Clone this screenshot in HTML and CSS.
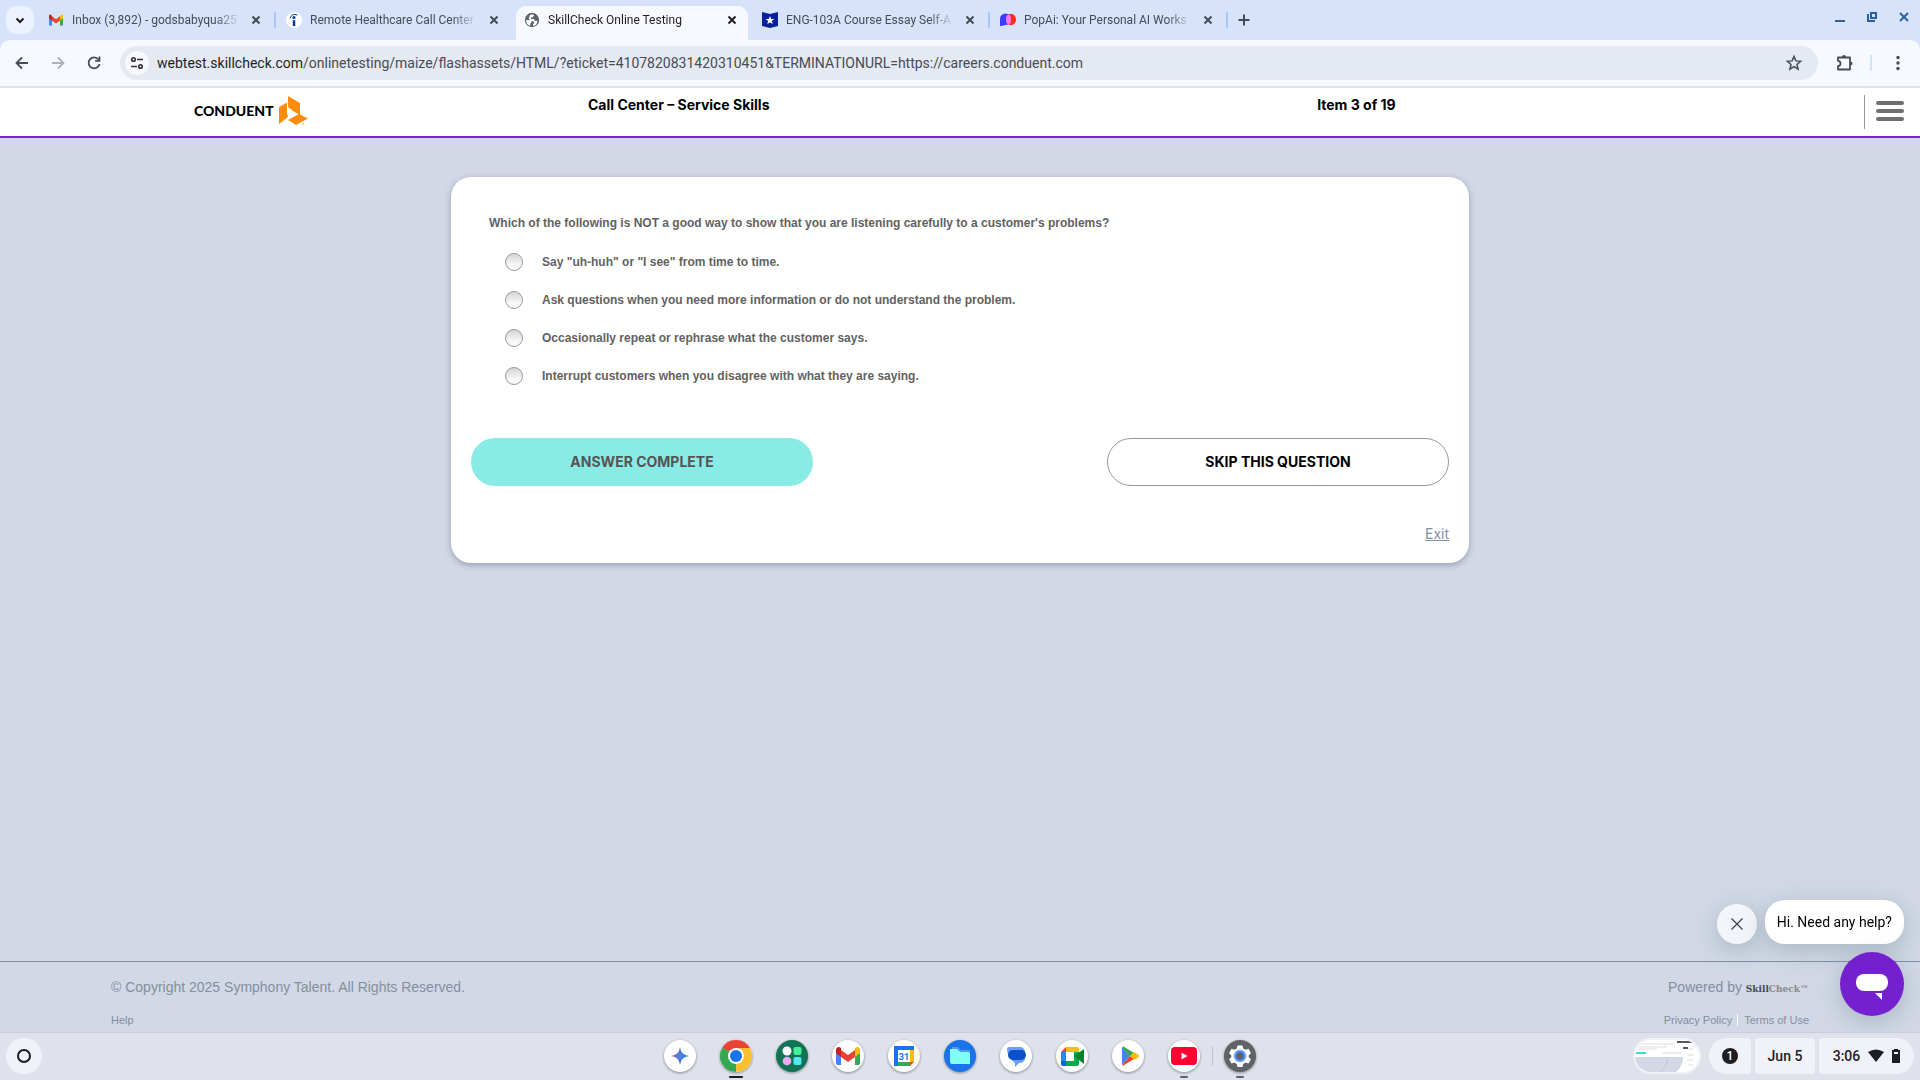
FILE: index.html
```html
<!DOCTYPE html>
<html lang="en">
<head>
    <meta charset="UTF-8">
    <meta name="viewport" content="width=device-width, initial-scale=1.0">
    <title>SkillCheck Online Testing</title>
    <link rel="stylesheet" href="styles.css">
</head>
<body>
    <!-- Browser tabs -->
    <div class="tab-strip">
        <button class="tab-search" aria-label="Search tabs"><svg width="28" height="28" viewBox="0 0 28 28"><path d="M10.5 12.5l3.5 3.5 3.5-3.5" fill="none" stroke="#1f1f1f" stroke-width="2"/></svg></button>
        <div class="tabs">
            <div class="tab">
                <svg class="favicon" viewBox="0 0 16 16"><path d="M1 4v9.500h3V7z" fill="#4285f4"/><path d="M15 4v9.500h-3V7z" fill="#34a853"/><path d="M4 8.500V4.200l4 3 4-3v4.300l-4 3z" fill="#ea4335"/><path d="M1 4q0-2 2-1.300l1 1.500v4.300L1 6.200z" fill="#c5221f"/><path d="M15 4q0-2-2-1.300l-1 1.500v4.300l3-2.300z" fill="#fbbc04"/></svg>
                <span class="tab-title">Inbox (3,892) - godsbabyqua25</span>
                <button class="tab-close" aria-label="Close tab"><svg width="16" height="16" viewBox="0 0 16 16"><path d="M4.500 4.500l7 7M11.500 4.500l-7 7"/></svg></button>
            </div>
            <div class="tab">
                <svg class="favicon" viewBox="0 0 16 16"><circle cx="8" cy="8" r="8" fill="#fff"/><circle cx="8" cy="5.500" r="1.500" fill="#003a9b"/><path d="M8 8.200v5.800" stroke="#003a9b" stroke-width="2.500"/><path d="M4 6.500Q5.500 1 11.500 3" fill="none" stroke="#003a9b"/></svg>
                <span class="tab-title">Remote Healthcare Call Center</span>
                <button class="tab-close" aria-label="Close tab"><svg width="16" height="16" viewBox="0 0 16 16"><path d="M4.500 4.500l7 7M11.500 4.500l-7 7"/></svg></button>
            </div>
            <div class="tab active">
                <svg class="favicon" viewBox="0 0 16 16"><circle cx="8" cy="8" r="7.200" fill="#5f6368"/><path d="M2 8l4 .3 1.500 1.600L6.300 12v1.800A6 6 0 0 1 2 8zM6 3l3-.8 1 1.600-1.700 1.600H6.800v1.500h3.100L11 9l2.500-.2Q13 13.500 9 14v-1.800l1.300-1.500-1-1.500H6.700L4.700 6.400z" fill="#fff"/></svg>
                <span class="tab-title">SkillCheck Online Testing</span>
                <button class="tab-close" aria-label="Close tab"><svg width="16" height="16" viewBox="0 0 16 16"><path d="M4.500 4.500l7 7M11.500 4.500l-7 7"/></svg></button>
            </div>
            <div class="tab">
                <svg class="favicon" viewBox="0 0 16 16"><path d="M0 0l8 2 8-2v14l-8 2-8-2z" fill="#07209b"/><path d="M8 4l1.200 2.900 3.100.2-2.400 2 .8 3L8 10.400l-2.700 1.700.8-3-2.400-2 3.100-.2z" fill="#fff"/></svg>
                <span class="tab-title">ENG-103A Course Essay Self-A</span>
                <button class="tab-close" aria-label="Close tab"><svg width="16" height="16" viewBox="0 0 16 16"><path d="M4.500 4.500l7 7M11.500 4.500l-7 7"/></svg></button>
            </div>
            <div class="tab">
                <svg class="favicon" viewBox="0 0 16 16"><path d="M0 14V7a5.500 5.500 0 0 1 11 0c0 4-3 6-6 6q-2 1-5 1z" fill="#3c3cff"/><ellipse cx="11" cy="7.500" rx="5" ry="5.800" fill="#ff2a1a"/><ellipse cx="8.500" cy="7.500" rx="2.500" ry="4.800" fill="#f47af5"/></svg>
                <span class="tab-title">PopAi: Your Personal AI Works</span>
                <button class="tab-close" aria-label="Close tab"><svg width="16" height="16" viewBox="0 0 16 16"><path d="M4.500 4.500l7 7M11.500 4.500l-7 7"/></svg></button>
            </div>
        </div>
        <button class="new-tab" aria-label="New tab"><svg width="16" height="16" viewBox="0 0 16 16"><path d="M8 2.500v11M2.500 8h11" stroke="#444c58" stroke-width="2"/></svg></button>
        <div class="window-controls">
            <button aria-label="Minimize"><svg width="16" height="16" viewBox="0 0 16 16"><path d="M3 12h10" stroke="#2862a0" stroke-width="2"/></svg></button>
            <button aria-label="Restore"><svg width="16" height="16" viewBox="0 0 16 16"><path d="M7 4h5v5H7zM4 5v7h7" fill="none" stroke="#2862a0" stroke-width="2"/></svg></button>
            <button aria-label="Close"><svg width="16" height="16" viewBox="0 0 16 16"><path d="M4 4l8 8M12 4l-8 8" stroke="#2862a0" stroke-width="2"/></svg></button>
        </div>
    </div>

    <!-- Address bar -->
    <div class="toolbar">
        <button aria-label="Back"><svg width="20" height="20" viewBox="0 0 20 20"><path d="M16 10H5M10 4.500L4.500 10l5.500 5.500" fill="none" stroke="#444c58" stroke-width="1.800"/></svg></button>
        <button aria-label="Forward"><svg width="20" height="20" viewBox="0 0 20 20"><path d="M4 10h11M10 4.500l5.500 5.500-5.500 5.500" fill="none" stroke="#aeb0b5" stroke-width="1.800"/></svg></button>
        <button aria-label="Reload"><svg width="20" height="20" viewBox="0 0 20 20"><path d="M14.500 6.500a5.500 5.500 0 1 0 1 4.500M15.500 3.500v4.300h-4.300" fill="none" stroke="#444c58" stroke-width="1.800"/></svg></button>
        <div class="omnibox">
            <button class="site-info" aria-label="Site information"><svg width="16" height="16" viewBox="0 0 16 16"><g fill="none" stroke="#333" stroke-width="1.600"><circle cx="4.500" cy="4.500" r="1.800"/><circle cx="11.500" cy="11.500" r="1.800"/><path d="M8 4.500h6M2 11.500h6"/></g></svg></button>
            <span class="url"><b>webtest.skillcheck.com</b>/onlinetesting/maize/flashassets/HTML/?eticket=4107820831420310451&amp;TERMINATIONURL=https://careers.conduent.com</span>
            <button class="bookmark" aria-label="Bookmark this tab"><svg width="18" height="18" viewBox="0 0 18 18"><path d="M9 2.500l1.900 4.400 4.700.4-3.600 3.100 1.100 4.700L9 12.600l-4.100 2.500L6 10.400 2.400 7.300l4.700-.4z" fill="none" stroke="#444c58" stroke-width="1.500"/></svg></button>
        </div>
        <button class="extensions" aria-label="Extensions"><svg width="20" height="20" viewBox="0 0 20 20"><path d="M4 4.500h12v12H4v-3.300q2.500-.2 2.500-2.700T4 7.800z" fill="none" stroke="#444c58" stroke-width="1.800" stroke-linejoin="round"/><path d="M8 4a2 2 0 0 1 4 0zM16.500 8.500a2 2 0 0 1 0 4z" fill="#444c58"/></svg></button>
        <span class="toolbar-divider"></span>
        <button class="more" aria-label="More"><svg width="20" height="20" viewBox="0 0 20 20"><g fill="#444c58"><circle cx="10" cy="4.500" r="1.700"/><circle cx="10" cy="10" r="1.700"/><circle cx="10" cy="15.500" r="1.700"/></g></svg></button>
    </div>

    <!-- Page -->
    <header class="page-header">
        <div class="logo">
            <span>CONDUENT</span>
            <svg width="30" height="30" viewBox="0 0 30 30" fill="#ff8c0a"><path d="M9 0l12 7v12l-7-4-5-4z"/><path d="M0 11l8-4.500V17l1 4-9 7z"/><path d="M20 18l9 4.500-12 6.500-8-5z"/><circle cx="24" cy="28" r=".8"/></svg>
        </div>
        <h1>Call Center – Service Skills</h1>
        <div class="item-count">Item 3 of 19</div>
        <button class="menu" aria-label="Menu"><span></span><span></span><span></span></button>
    </header>

    <main class="content">
        <form class="card">
            <fieldset>
                <legend>Which of the following is NOT a good way to show that you are listening carefully to a customer's problems?</legend>
                <label><input type="radio" name="answer">Say "uh-huh" or "I see" from time to time.</label>
                <label><input type="radio" name="answer">Ask questions when you need more information or do not understand the problem.</label>
                <label><input type="radio" name="answer">Occasionally repeat or rephrase what the customer says.</label>
                <label><input type="radio" name="answer">Interrupt customers when you disagree with what they are saying.</label>
            </fieldset>
            <div class="actions">
                <button type="button" class="answer">ANSWER COMPLETE</button>
                <button type="button" class="skip">SKIP THIS QUESTION</button>
            </div>
            <a class="exit" href="#">Exit</a>
        </form>
    </main>

    <footer class="page-footer">
        <div class="footer-row">
            <span>© Copyright 2025 Symphony Talent. All Rights Reserved.</span>
            <span>Powered by <span class="brand"><b>Skill</b>Check™</span></span>
        </div>
        <div class="footer-row footer-links">
            <a href="#">Help</a>
            <div class="legal"><a href="#">Privacy Policy</a><a href="#">Terms of Use</a></div>
        </div>
    </footer>

    <!-- Chat widget -->
    <div class="chat">
        <div class="chat-row">
            <button class="chat-dismiss" aria-label="Dismiss"><svg width="14" height="14" viewBox="0 0 14 14"><path d="M1.500 1.500l11 11M12.500 1.500l-11 11" stroke="#3c4450" stroke-width="1.300"/></svg></button>
            <div class="chat-bubble">Hi. Need any help?</div>
        </div>
        <button class="chat-open" aria-label="Open chat"><svg width="64" height="64" viewBox="0 0 64 64" fill="#fff"><rect x="16" y="22" width="32" height="17" rx="8"/><path d="M35 41h7v7z"/></svg></button>
    </div>

    <!-- Shelf -->
    <div class="shelf">
        <button class="launcher" aria-label="Launcher"><svg width="16" height="16" viewBox="0 0 16 16"><circle cx="8" cy="8" r="6" fill="none" stroke="#1b1d22" stroke-width="2"/></svg></button>
        <div class="apps">
            <button aria-label="Gemini"><svg viewBox="0 0 32 32"><defs><linearGradient id="spark"><stop offset="0" stop-color="#8a6fc0"/><stop offset="1" stop-color="#1c8bea"/></linearGradient></defs><path d="M16 7q1 8 9 9-8 1-9 9-1-8-9-9 8-1 9-9z" fill="url(#spark)"/></svg></button>
            <button class="open current" aria-label="Chrome"><svg viewBox="0 0 32 32"><path d="M16 16L2.140 8A16 16 0 0 1 29.860 8z" fill="#ea4335"/><path d="M16 16L29.860 8A16 16 0 0 1 16 32z" fill="#fbc02d"/><path d="M16 16v16A16 16 0 0 1 2.140 8z" fill="#34a853"/><path d="M16 8h13.860L23 20l-7 12 3-9z" fill="#fbc02d"/><path d="M2.140 8l7 12L16 24l-5-12z" fill="#34a853"/><circle cx="16" cy="16" r="8" fill="#fff"/><circle cx="16" cy="16" r="6" fill="#1a73e8"/></svg></button>
            <button class="green" aria-label="Apps"><svg viewBox="0 0 32 32"><circle cx="11" cy="11" r="4.500" fill="#fff"/><rect x="17.500" y="7" width="8" height="8" rx="2" fill="#46ef98"/><circle cx="11" cy="21" r="4.300" fill="#efabf5"/><rect x="17.500" y="17" width="8" height="8" rx="2" fill="#57e8ef"/></svg></button>
            <button aria-label="Gmail"><svg viewBox="0 0 32 32"><path d="M4 10v13q0 2 2 2h3V13z" fill="#4285f4"/><path d="M28 10v13q0 2-2 2h-3V13z" fill="#34a853"/><path d="M9 17v-7l7 5 7-5v7l-7 5z" fill="#ea4335"/><path d="M4 10c0-3 3-4 5-2v9l-5-4z" fill="#c5221f"/><path d="M28 10c0-3-3-4-5-2v9l5-4z" fill="#fbbc04"/></svg></button>
            <button aria-label="Calendar"><svg viewBox="0 0 32 32"><path d="M6 6h20v4H10v16H6z" fill="#1a73e8"/><path d="M22 10h4v12h-4z" fill="#fbbc04"/><path d="M10 22h12v4H10z" fill="#34a853"/><path d="M22 22h4l-4 4z" fill="#ea4335"/><path d="M10 10h12v12H10z" fill="#fff"/><text x="16" y="20" class="calendar-day">31</text></svg></button>
            <button class="blue" aria-label="Files"><svg viewBox="0 0 32 32"><path d="M8 7h6l3 3h9v13H8z" fill="#4b9bff"/><path d="M6 9h7l3 3h8q2 0 2 2v10H8q-2 0-2-2z" fill="#83fff4"/></svg></button>
            <button aria-label="Messages"><svg viewBox="0 0 32 32"><path d="M9 7h11a5 5 0 0 1 5 5v6a5 5 0 0 1-5 5h-1l-4 4v-4q-7-5-8-13 0-3 2-3z" fill="#6c9cf8"/><rect x="8" y="10" width="18" height="10" rx="5" fill="#0b50c8"/></svg></button>
            <button aria-label="Meet"><svg viewBox="0 0 32 32"><path d="M5 12l5-5v5z" fill="#ea4335"/><path d="M10 7h11q2 0 2 2v3H10z" fill="#fbbc04"/><path d="M5 12h5v9H5z" fill="#2684fc"/><path d="M5 21h5v5H7q-2 0-2-2z" fill="#0066da"/><path d="M10 21h8v-9h5v12q0 2-2 2H10z" fill="#00ac47"/><path d="M10 12h8v9h-8z" fill="#fff"/><path d="M18 16l10-7v15z" fill="#00832d"/></svg></button>
            <button aria-label="Play Store"><svg viewBox="0 0 32 32"><path d="M10 7v18l8-9z" fill="#4285f4"/><path d="M10 7q1-1 3 .5l10 6-5 3z" fill="#34a853"/><path d="M10 25l8-9 4 3-10 6q-1 1-2 0z" fill="#ea4335"/><path d="M22 12l4 2.500q2 1.500 0 3L22 20l-4-4z" fill="#fbbc04"/></svg></button>
            <button class="open" aria-label="YouTube"><svg viewBox="0 0 32 32"><rect x="3" y="7" width="26" height="18" rx="4" fill="#ff0033"/><path d="M13.500 12.500v7l6-3.500z" fill="#fff"/></svg></button>
            <span class="shelf-divider"></span>
            <button class="open gray" aria-label="Settings"><svg viewBox="0 0 32 32"><path d="M13.500 5.500h5l.7 3 2.300 1.300 3-1 2.500 4.400-2.300 2v2l2.300 2-2.500 4.300-3-1-2.300 1.400-.7 3h-5l-.7-3-2.300-1.400-3 1L5 19.200l2.300-2v-2L5 13.200l2.500-4.400 3 1 2.300-1.300z" fill="#fff"/><circle cx="16" cy="16" r="6.500" fill="#8ab4f8"/><circle cx="16" cy="16" r="5" fill="#4285f4"/><circle cx="16" cy="16" r="3.500" fill="#5f6368"/></svg></button>
        </div>
        <div class="status">
            <button class="holding" aria-label="Recent screenshots"><svg width="64" height="32" viewBox="0 0 64 32"><defs><clipPath id="shots"><rect width="64" height="32" rx="16"/></clipPath></defs><g clip-path="url(#shots)"><rect width="64" height="32" fill="#fff"/><path d="M0 17h48q0 9-7 15H0z" fill="#d2d8e6"/><path d="M25 32q8-6 8-15" fill="none" stroke="#bcc4d6"/><path d="M2 4h38M3 7h29M4 9h18M27 13h20M52 9h6M53 15h6M52 20h6M53 25h5" stroke="#ddd"/><path d="M1 13h10" stroke="#49d9ce" stroke-width="2"/><path d="M42 2h17M48 8h5" stroke="#222" stroke-width="1.500"/></g></svg></button>
            <button class="notice" aria-label="Notifications"><span>1</span></button>
            <button class="date">Jun 5</button>
            <button class="clock">3:06
                <svg width="16" height="14" viewBox="0 0 16 14"><path d="M0 3q8-5 16 0L8 13z" fill="#1b1d22"/></svg>
                <svg width="8" height="14" viewBox="0 0 8 14"><path d="M2 0h4v1h2v13H0V1h2z" fill="#1b1d22"/><path d="M2 3h4v2H2z" fill="#f1f1f8"/></svg>
            </button>
        </div>
    </div>
</body>
</html>
```
FILE: styles.css
```css
* {
    box-sizing: border-box;
}
body {
    font-family: Roboto, sans-serif;
    display: flex;
    flex-direction: column;
    min-height: 100vh;
    margin: 0;
    background: #d2d8e6;
}
button {
    display: flex;
    align-items: center;
    justify-content: center;
    flex-shrink: 0;
    padding: 0;
    border: none;
    background: none;
    font-family: inherit;
    cursor: pointer;
}
h1 {
    margin: 0;
}

/* tabs, the strip runs on behind the toolbar's round corners */
.tab-strip {
    display: flex;
    height: 50px;
    margin-bottom: -10px;
    background: #d6e3fa;
}
.tab-search {
    width: 28px;
    height: 28px;
    margin: 6px 4px 0 6px;
    border-radius: 10px;
    background: #ecf2fe;
}
.tabs {
    display: flex;
}
.tab {
    display: flex;
    align-items: center;
    position: relative;
    width: 238px;
    height: 40px;
    padding-left: 10px;
    font-size: 12px;
    color: #444c58;
}
.tab::after {
    content: "";
    width: 2px;
    height: 16px;
    margin-left: 10px;
    background: #a8c7fa;
}
.favicon {
    width: 16px;
    height: 16px;
    flex-shrink: 0;
}
.tab-title {
    flex: 1;
    margin: 0 8px;
    overflow: hidden;
    white-space: nowrap;
    -webkit-mask-image: linear-gradient(to right, #000 85%, transparent);
    mask-image: linear-gradient(to right, #000 85%, transparent);
}
.tab-close svg {
    fill: none;
    stroke: #444c58;
    stroke-width: 2;
}
.tab.active {
    z-index: 0;
    color: #1f1f1f;
}
.tab.active::before {
    content: "";
    position: absolute;
    inset: 6px 4px 0 2px;
    z-index: -1;
    border-radius: 10px 10px 0 0;
    background: #f8f9ff;
}
.tab.active .tab-close svg {
    stroke: #1f1f1f;
}
.tab.active::after,
.tab:has(+ .active)::after {
    background: transparent;
}
.new-tab {
    width: 32px;
    height: 40px;
}
.window-controls {
    display: flex;
    gap: 16px;
    height: 34px;
    margin-left: auto;
    padding-right: 8px;
}

/* toolbar */
.toolbar {
    display: flex;
    align-items: center;
    z-index: 0;
    height: 48px;
    padding: 0 12px;
    border-bottom: 2px solid #dfe3ea;
    border-radius: 10px 10px 0 0;
    background: #f8f9ff;
}
.toolbar > button {
    width: 20px;
    margin-right: 16px;
}
.omnibox {
    display: flex;
    align-items: center;
    flex: 1;
    height: 34px;
    margin-right: 16px;
    padding: 0 15px 0 5px;
    border-radius: 17px;
    background: #e5e9f2;
}
.site-info {
    width: 24px;
    height: 24px;
    border-radius: 12px;
    background: #f8f9ff;
}
.url {
    flex: 1;
    margin-left: 8px;
    font-size: 14px;
    color: #474c55;
    white-space: nowrap;
}
.url b {
    font-weight: normal;
    color: #1f1f1f;
}
.toolbar-divider {
    width: 2px;
    height: 16px;
    margin-right: 16px;
    background: #d3e3fd;
}
.toolbar > .more {
    margin-right: 0;
}

/* page header */
.page-header {
    display: grid;
    grid-template-columns: 588px 4fr 3fr 56px;
    height: 50px;
    border-bottom: 2px solid #7424d0;
    background: #fff;
    font-family: Inter, sans-serif;
    font-size: 14px;
    font-weight: bold;
    line-height: 34px;
    color: #000;
}
.logo {
    display: flex;
    align-items: center;
    gap: 5px;
    padding: 0 0 2px 194px;
    font-family: Lato, sans-serif;
    font-weight: 900;
}
.page-header h1 {
    font-size: inherit;
}
.menu {
    flex-direction: column;
    gap: 4px;
    height: 34px;
    margin: 7px 0;
    padding: 0 6px 2px 0;
    border-left: 1px solid #999;
}
.menu span {
    width: 28px;
    height: 4px;
    border-radius: 2px;
    background: #707070;
}

/* question */
.content {
    flex: 1;
    padding: 39px 20px;
}
.card {
    max-width: 1018px;
    margin: auto;
    padding: 37px 20px 19px;
    border-radius: 20px;
    background: #fff;
    box-shadow: 0 2px 6px rgba(60, 70, 100, 0.4);
}
fieldset {
    margin: 0;
    padding: 0 0 0 18px;
    border: none;
    font: bold 12px/18px "Liberation Sans", Arial, sans-serif;
    color: #626262;
}
legend {
    padding: 0;
    margin-bottom: 11px;
}
fieldset label {
    display: flex;
    align-items: center;
    height: 38px;
    padding-left: 16px;
}
fieldset input {
    appearance: none;
    width: 18px;
    height: 18px;
    margin: 0 19px 0 0;
    border: 1px solid #999;
    border-radius: 50%;
    background: linear-gradient(#d4d4d4, #f8f8f8 70%);
}
.actions {
    display: flex;
    justify-content: space-between;
    margin-top: 43px;
}
.actions button {
    width: 342px;
    height: 48px;
    padding-bottom: 2px;
    border-radius: 24px;
    font: bold 14px Inter, sans-serif;
}
.answer {
    background: #88ebe6;
    color: #555;
}
.actions .skip {
    border: 1px solid #999;
    color: #000;
}
.exit {
    display: block;
    margin-top: 38px;
    font: 14px/20px Inter, sans-serif;
    text-align: right;
    color: #8090a0;
}

/* footer */
.page-footer {
    height: 119px;
    padding: 15px 111px 0;
    border-top: 1px solid #8090a0;
    font-family: "Liberation Sans", Arial, sans-serif;
    font-size: 14px;
    line-height: 20px;
    color: #8090a0;
}
.footer-row {
    display: flex;
    justify-content: space-between;
}
.brand {
    font: bold 9px "DejaVu Serif", serif;
    color: #888;
}
.brand b {
    color: #444a58;
}
.footer-links {
    margin-top: 15px;
    font-size: 11px;
    line-height: 16px;
}
.footer-links a {
    color: inherit;
    text-decoration: none;
}
.legal a + a {
    margin-left: 5px;
    padding-left: 6px;
    border-left: 1px solid #fff;
}

/* chat */
.chat {
    display: flex;
    flex-direction: column;
    align-items: flex-end;
    gap: 8px;
    position: fixed;
    right: 16px;
    bottom: 64px;
}
.chat-row {
    display: flex;
    align-items: flex-end;
    gap: 8px;
}
.chat-dismiss,
.chat-bubble,
.chat-open {
    box-shadow: 0 6px 24px rgba(90, 120, 130, 0.35);
}
.chat-dismiss {
    width: 40px;
    height: 40px;
    border-radius: 50%;
    background: #f3f5fa;
}
.chat-bubble {
    padding: 0 12px;
    border-radius: 20px;
    background: #fff;
    font-size: 14px;
    line-height: 44px;
    color: #000;
}
.chat-open {
    width: 64px;
    height: 64px;
    border-radius: 50%;
    background: #7420ce;
}

/* shelf */
.shelf {
    display: grid;
    grid-template-columns: 1fr auto 1fr;
    align-items: center;
    position: fixed;
    inset: auto 0 0;
    height: 48px;
    padding: 0 6px 1px;
    border-top: 1px solid #c8ccd8;
    background: #dfe2eb;
}
.launcher {
    width: 36px;
    height: 36px;
    border-radius: 50%;
    background: #f1f1f8;
}
.apps {
    display: flex;
    align-items: center;
    gap: 24px;
}
.apps button {
    position: relative;
    width: 32px;
    height: 32px;
    border-radius: 50%;
    background: #fff;
    box-shadow: 0 1px 3px rgba(0, 0, 0, 0.4);
}
.apps svg {
    width: 32px;
    height: 32px;
}
.apps .green {
    background: #137355;
}
.apps .blue {
    background: #1a73e8;
}
.apps .gray {
    background: #5f6368;
}
.apps .open::after {
    content: "";
    position: absolute;
    bottom: -6px;
    width: 8px;
    height: 2px;
    border-radius: 1px;
    background: #5a6275;
}
.apps .current::after {
    width: 14px;
    background: #1b1d22;
}
.calendar-day {
    font: bold 9px Roboto, sans-serif;
    text-anchor: middle;
    fill: #1a73e8;
}
.shelf-divider {
    width: 1px;
    height: 20px;
    margin: 0 -13px 0 -12px;
    background: #bfc3ce;
}
.status {
    display: flex;
    justify-content: flex-end;
    gap: 4px;
}
.status button {
    height: 36px;
    border-radius: 4px;
    background: #f1f1f8;
    font-size: 14px;
    font-weight: 500;
    color: #1b1d22;
}
.status .holding {
    width: 68px;
    margin-right: 4px;
    border-radius: 18px;
}
.status .notice {
    width: 42px;
    border-radius: 18px 4px 4px 18px;
}
.notice span {
    width: 16px;
    border-radius: 8px;
    background: #1b1d22;
    font-size: 12px;
    line-height: 16px;
    color: #fff;
}
.status .date {
    width: 60px;
}
.status .clock {
    gap: 8px;
    width: 95px;
    border-radius: 4px 18px 18px 4px;
}
```
